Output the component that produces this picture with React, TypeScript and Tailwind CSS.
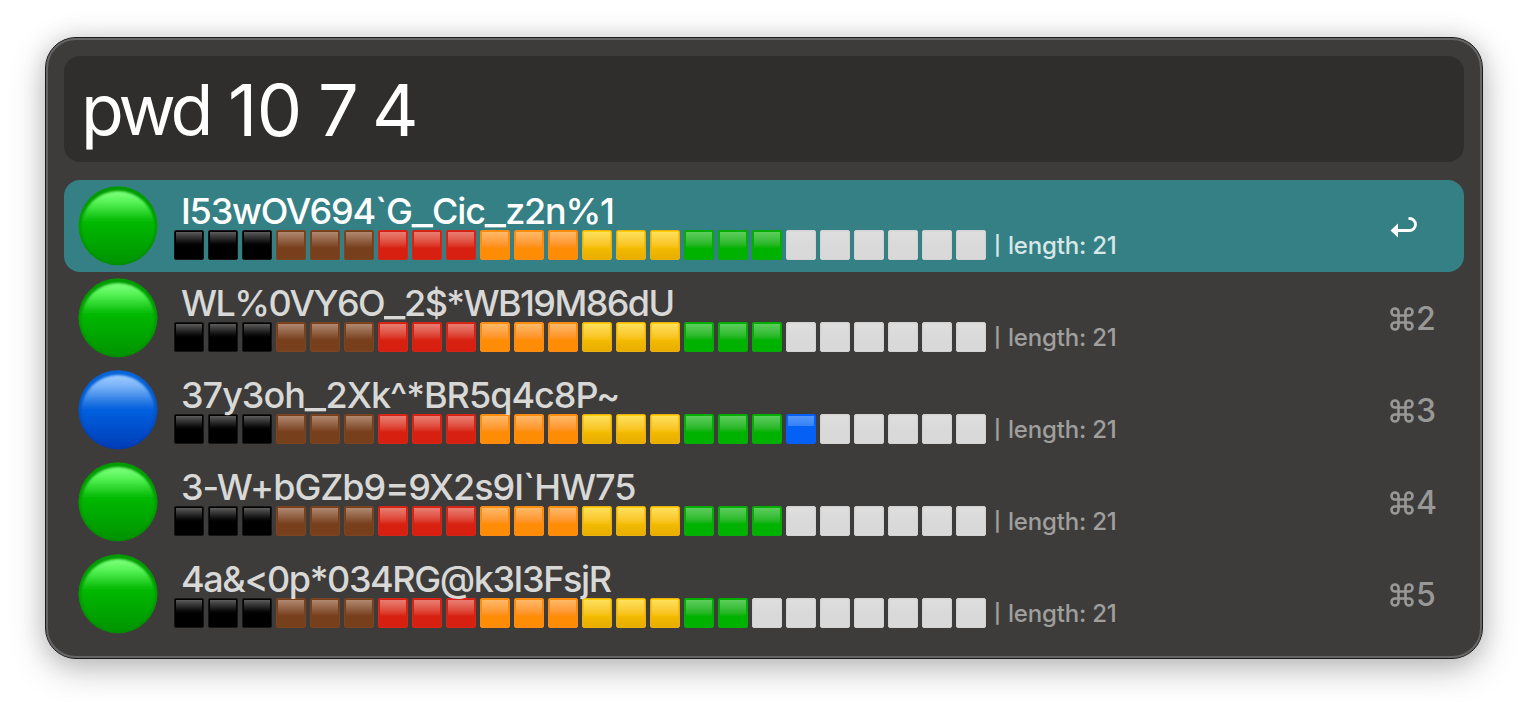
type Tone = "black" | "brown" | "red" | "orange" | "yellow" | "green" | "blue" | "white";

interface Entry {
  password: string;
  tracking: string;
  level: "green" | "blue";
  filled: number;
  shortcut: string;
}

const LENGTH = 21;
const SLOTS = 24;

const entries: Entry[] = [
  { password: "I53wOV694`G_Cic_z2n%1", tracking: "tracking-[-1.2px]", level: "green", filled: 18, shortcut: "↩" },
  { password: "WL%0VY6O_2$*WB19M86dU", tracking: "tracking-[-1.6px]", level: "green", filled: 18, shortcut: "2" },
  { password: "37y3oh_2Xk^*BR5q4c8P~", tracking: "tracking-[-1px]", level: "blue", filled: 19, shortcut: "3" },
  { password: "3-W+bGZb9=9X2s9I`HW75", tracking: "tracking-[-1px]", level: "green", filled: 18, shortcut: "4" },
  { password: "4a&<0p*034RG@k3I3FsjR", tracking: "tracking-[-1.4px]", level: "green", filled: 17, shortcut: "5" },
];

const order: Tone[] = ["black", "brown", "red", "orange", "yellow", "green", "blue"];

const tones: Record<Tone, { base: string; gloss: string }> = {
  black: { base: "bg-black border-[#151515]", gloss: "from-[#5c5c5c] to-black" },
  brown: { base: "bg-[#773f1c] border-[#7b4522]", gloss: "from-[#b08970] to-[#773f1c]" },
  red: { base: "bg-[#d82010] border-[#d5261a]", gloss: "from-[#e87d72] to-[#d82010]" },
  orange: { base: "bg-[#ff8c05] border-[#f98b16]", gloss: "from-[#ffb966] to-[#ff8c05]" },
  yellow: { base: "bg-linear-to-b from-[#ffcf00] to-[#e9ad00] border-[#e8b010]", gloss: "from-[#ffe05a] to-[#f6be00]" },
  green: { base: "bg-[#00b200] border-[#08aa08]", gloss: "from-[#5ccd5c] to-[#00b200]" },
  blue: { base: "bg-[#0561f5] border-[#0561f5]", gloss: "from-[#5597fa] to-[#3581f8]" },
  white: { base: "bg-[#d9d9d9] border-[#d2d2d2]", gloss: "from-[#dedede] to-[#d9d9d9]" },
};

function Square({ tone }: { tone: Tone }) {
  return (
    <div className={`h-[30px] w-[30px] rounded-[2px] border p-px ${tones[tone].base}`}>
      <div className={`bg-linear-to-b ${tone === "blue" ? "h-[10px]" : "h-[16px]"} ${tones[tone].gloss}`} />
    </div>
  );
}

function Orb({ level }: { level: "green" | "blue" }) {
  const green = level === "green";
  return (
    <svg className="h-20 w-20 shrink-0" viewBox="0 0 80 80">
      <defs>
        <linearGradient id={`body-${level}`} x1="0" y1="0" x2="0" y2="1">
          <stop offset="0" stopColor={green ? "#009a00" : "#0565dc"} />
          <stop offset="0.5" stopColor={green ? "#009f00" : "#0055cb"} />
          <stop offset="1" stopColor={green ? "#008b00" : "#0038ad"} />
        </linearGradient>
        <linearGradient id={`gloss-${level}`} x1="0" y1="0" x2="0" y2="1">
          <stop offset="0" stopColor={green ? "#80ff80" : "#a0ccff"} />
          <stop offset="0.15" stopColor={green ? "#58f458" : "#7bb4f8"} />
          <stop offset="0.4" stopColor={green ? "#08bd08" : "#1d71e1"} />
          <stop offset="0.48" stopColor={green ? "#00b500" : "#0060df"} />
          <stop offset="1" stopColor={green ? "#009400" : "#003eb8"} />
        </linearGradient>
        <filter id={`soft-${level}`}>
          <feGaussianBlur stdDeviation="1.2" />
        </filter>
      </defs>
      <circle cx="40" cy="39.8" r="39.5" fill={`url(#body-${level})`} />
      <ellipse cx="40" cy="41.3" rx="36.6" ry="36.4" fill={`url(#gloss-${level})`} filter={`url(#soft-${level})`} />
    </svg>
  );
}

function Password({ value }: { value: string }) {
  return (
    <>
      {value.split(/(_)/).map((part, i) =>
        part === "_" ? (
          <span key={i} className="mx-[2.5px] inline-block scale-x-[1.28]">
            _
          </span>
        ) : (
          part
        ),
      )}
    </>
  );
}

function Row({ entry, selected }: { entry: Entry; selected: boolean }) {
  const squares = Array.from({ length: SLOTS }, (_, i): Tone => (i < entry.filled ? order[Math.floor(i / 3)] : "white"));
  return (
    <div className={`flex h-[92px] items-start rounded-2xl pt-1.5 pl-3.5 ${selected ? "bg-[#358085]" : ""}`}>
      <Orb level={entry.level} />
      <div className="ml-4 flex-1">
        <div
          className={`relative z-10 h-11 pl-[7px] text-[36px] leading-[50px] font-[450] whitespace-pre ${entry.tracking} ${selected ? "text-white" : "text-[#d8d8d7]"}`}
        >
          <Password value={entry.password} />
        </div>
        <div className="flex gap-1">
          {squares.map((tone, i) => (
            <Square key={i} tone={tone} />
          ))}
          <span
            className={`ml-1 flex text-[24px] leading-[32px] font-[450] tracking-[-0.2px] whitespace-pre ${selected ? "text-[#d7e6e7]" : "text-[#9f9f9d]"}`}
          >
            <span className="w-3.5 text-[19px] leading-[32px] font-semibold">|</span>
            length: {LENGTH}
          </span>
        </div>
      </div>
      <div className="w-[74px] shrink-0 pt-[19px]">
        {selected ? (
          <svg className="mt-[11px] h-[22px] w-7" viewBox="0 0 28 22" fill="none">
            <path d="M7 14.5h12.5a6 6 0 0 0 0-12H18.5" stroke="white" strokeWidth="2.8" />
            <path d="M0.5 14.5 8 7.5v14z" fill="white" />
          </svg>
        ) : (
          <div className="flex items-center pt-0.5 text-[32px] leading-[40px] font-[450] text-[#989896]">
            <svg className="h-6 w-6" viewBox="0 0 24 24" fill="none" stroke="currentColor" strokeWidth="2.6">
              <path d="M8.5 8.5H5a3.5 3.5 0 1 1 3.5-3.5v14A3.5 3.5 0 1 1 5 15.5h14a3.5 3.5 0 1 1-3.5 3.5V5a3.5 3.5 0 1 1 3.5 3.5z" />
            </svg>
            <span className="ml-0.5">{entry.shortcut}</span>
          </div>
        )}
      </div>
    </div>
  );
}

export default function App() {
  return (
    <main className="h-[712px] w-[1528px] overflow-hidden bg-white px-[45px] pt-[37px] font-['Inter',sans-serif]">
      <div className="h-[622px] rounded-[31px] border border-[#1c1b1c] bg-[#3e3c3b] shadow-[0_10px_34px_rgba(0,0,0,0.26),0_0_24px_rgba(0,0,0,0.1)]">
        <div className="h-full rounded-[30px] border-2 border-[#666566] px-4 pt-4">
          <div className="flex h-[106px] rounded-2xl bg-[#2f2e2c] pl-[17px] text-[72px] leading-[108px] font-[375] tracking-[-2px] whitespace-pre text-white">
            <span className="w-[147px] text-[70px] tracking-[-4px]">pwd </span>
            <span className="w-[90px] tracking-[-0.5px]">10 </span>
            <span className="w-[54px]">7 </span>
            <span>4</span>
          </div>
          <div className="mt-[18px]">
            {entries.map((entry, i) => (
              <Row key={entry.password} entry={entry} selected={i === 0} />
            ))}
          </div>
        </div>
      </div>
    </main>
  );
}
